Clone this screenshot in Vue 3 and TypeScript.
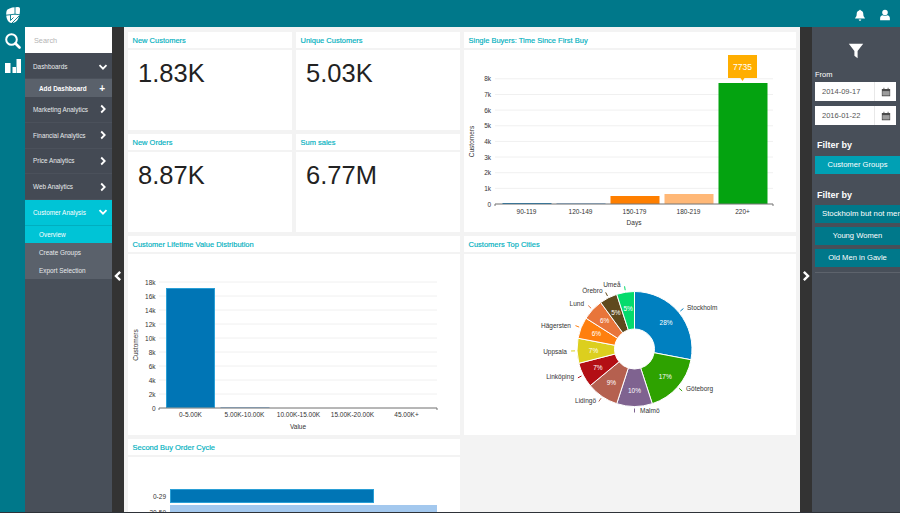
<script setup lang="ts">
interface Stat {
  title: string;
  value: string;
}
interface Slice {
  name: string;
  pct: number;
  color: string;
  lx: number;
  ly: number;
  anchor: string;
}

const stats: Stat[] = [
  { title: "New Customers", value: "1.83K" },
  { title: "Unique Customers", value: "5.03K" },
  { title: "New Orders", value: "8.87K" },
  { title: "Sum sales", value: "6.77M" },
];

const menu = [
  { label: "Marketing Analytics" },
  { label: "Financial Analytics" },
  { label: "Price Analytics" },
  { label: "Web Analytics" },
];

const buyersTicks = [0, 1, 2, 3, 4, 5, 6, 7, 8].map((n) => ({
  label: n === 0 ? "0" : n + "k",
  y: 154 - n * 15.65,
}));
const buyersBars = [
  { x: 38.5, h: 1, color: "#0075b5" },
  { x: 92.5, h: 1, color: "#8fb8dc" },
  { x: 146.5, h: 8, color: "#ff7f00" },
  { x: 200.5, h: 10, color: "#ffb877" },
  { x: 254.5, h: 121, color: "#04a310" },
];
const buyersLabels = [
  { x: 62.5, text: "90-119" },
  { x: 116.5, text: "120-149" },
  { x: 170.5, text: "150-179" },
  { x: 224.5, text: "180-219" },
  { x: 278.5, text: "220+" },
];

const lifetimeTicks = [0, 2, 4, 6, 8, 10, 12, 14, 16, 18].map((n) => ({
  label: n === 0 ? "0" : n + "k",
  y: 154 - n * 7,
}));
const lifetimeLabels = [
  { x: 62.5, text: "0-5.00K" },
  { x: 116.5, text: "5.00K-10.00K" },
  { x: 170.5, text: "10.00K-15.00K" },
  { x: 224.5, text: "15.00K-20.00K" },
  { x: 278.5, text: "45.00K+" },
];

const slices: Slice[] = [
  { name: "Stockholm", pct: 28, color: "#0080c0", lx: 223, ly: 53, anchor: "start" },
  { name: "Göteborg", pct: 17, color: "#2ea200", lx: 222, ly: 134, anchor: "start" },
  { name: "Malmö", pct: 10, color: "#7f6390", lx: 176, ly: 156, anchor: "start" },
  { name: "Lidingö", pct: 9, color: "#b5604f", lx: 132, ly: 146, anchor: "end" },
  { name: "Linköping", pct: 7, color: "#b30f14", lx: 110, ly: 122.5, anchor: "end" },
  { name: "Uppsala", pct: 7, color: "#dccf1e", lx: 103, ly: 97, anchor: "end" },
  { name: "Hägersten", pct: 6, color: "#ff7f0e", lx: 107, ly: 71, anchor: "end" },
  { name: "Lund", pct: 6, color: "#e8753a", lx: 120, ly: 49, anchor: "end" },
  { name: "Örebro", pct: 5, color: "#5f4a1e", lx: 138.5, ly: 36, anchor: "end" },
  { name: "Umeå", pct: 5, color: "#05db6c", lx: 156.5, ly: 30, anchor: "end" },
];

const cx = 170.5;
const cy = 95;
const outer = 57.5;
const inner = 20;
const polar = (r: number, turn: number) => {
  const a = turn * Math.PI * 2;
  return { x: cx + r * Math.sin(a), y: cy - r * Math.cos(a) };
};

let run = 0;
const pie = slices.map((s) => {
  const start = run / 100;
  run += s.pct;
  const end = run / 100;
  const mid = (start + end) / 2;
  const a = polar(outer, start);
  const b = polar(outer, end);
  const c = polar(inner, end);
  const d = polar(inner, start);
  const l1 = polar(outer + 2, mid);
  const l2 = polar(outer + 6, mid);
  const p = polar(41, mid);
  return {
    ...s,
    path: `M${a.x} ${a.y}A${outer} ${outer} 0 0 1 ${b.x} ${b.y}L${c.x} ${c.y}A${inner} ${inner} 0 0 0 ${d.x} ${d.y}Z`,
    line: `M${l1.x} ${l1.y}L${l2.x} ${l2.y}`,
    px: p.x,
    py: p.y + 2.5,
  };
});
</script>

<template>
  <div class="app">
    <header class="topbar">
      <svg class="logo" viewBox="0 0 14 16">
        <path d="M1.500 2.500C4 .8 8 0 12 0c1.300 0 2 .7 2 2 0 4-.6 8-2.500 11-1.300 2-3.500 3-5.500 3-2.500 0-4-1.500-5-4C0 9.500-.3 4 1.500 2.500Z" />
        <path d="M9 0V7.500M0 8.200 9 7.200 14 7.800M4.500 8V13.500L7.500 10.500M6 16 13 9" class="logo-cut" />
      </svg>
      <div class="top-icons">
        <svg viewBox="0 0 16 16" class="top-icon">
          <path d="M8 1a1 1 0 0 1 1 1.100c2.400.5 3.400 2.500 3.400 4.600 0 3 1 4.300 2.100 5.300v.8H1.500V12c1.100-1 2.100-2.300 2.100-5.300 0-2.100 1-4.100 3.400-4.600A1 1 0 0 1 8 1ZM6.300 14h3.400a1.700 1.700 0 0 1-3.400 0Z" />
        </svg>
        <svg viewBox="0 0 16 16" class="top-icon">
          <circle cx="8" cy="4.700" r="3.700" />
          <path d="M1.500 15v-3c0-2.300 1.800-3.500 3.700-3.800 1.700 1.200 3.900 1.200 5.600 0 1.900.3 3.700 1.500 3.700 3.800v3Z" />
        </svg>
      </div>
    </header>

    <div class="main">
      <nav class="rail">
        <svg viewBox="0 0 17 17" class="rail-icon">
          <circle cx="7.500" cy="7.500" r="5.300" fill="none" stroke="#fff" stroke-width="2" />
          <path d="M11.500 11.500 15.500 15.500" stroke="#fff" stroke-width="2.600" stroke-linecap="round" />
        </svg>
        <svg viewBox="0 0 17 17" class="rail-icon bars">
          <rect x="1" y="6" width="5.500" height="10" />
          <rect x="8.500" y="10" width="3.500" height="6" />
          <rect x="12.500" y="2" width="4.500" height="14" />
        </svg>
      </nav>

      <aside class="sidebar">
        <div class="search">Search</div>
        <div class="row first">
          <span>Dashboards</span>
          <svg viewBox="0 0 10 10" class="chev"><path d="M1.500 3.200 5 6.700 8.500 3.200" /></svg>
        </div>
        <div class="row sub add">
          <span>Add Dashboard</span>
          <b class="plus">+</b>
        </div>
        <div v-for="item in menu" :key="item.label" class="row">
          <span>{{ item.label }}</span>
          <svg viewBox="0 0 10 10" class="chev"><path d="M3.200 1.500 6.700 5 3.200 8.500" /></svg>
        </div>
        <div class="row active">
          <span>Customer Analysis</span>
          <svg viewBox="0 0 10 10" class="chev"><path d="M1.500 3.200 5 6.700 8.500 3.200" /></svg>
        </div>
        <div class="row sub active-sub">Overview</div>
        <div class="row sub">Create Groups</div>
        <div class="row sub">Export Selection</div>
      </aside>

      <div class="strip">
        <svg viewBox="0 0 10 10" class="strip-chev"><path d="M6.800 1.500 3.300 5 6.800 8.500" /></svg>
      </div>

      <main class="content">
        <div class="grid">
          <section v-for="(s, i) in stats" :key="s.title" class="card" :class="'stat' + i">
            <h3>{{ s.title }}</h3>
            <div class="body value">{{ s.value }}</div>
          </section>

          <section class="card buyers">
            <h3>Single Buyers: Time Since First Buy</h3>
            <div class="body">
              <svg class="chart" viewBox="0 0 332 182" width="332" height="182">
                <g v-for="t in buyersTicks" :key="t.label">
                  <line x1="31" x2="309" :y1="t.y" :y2="t.y" class="grid-line" />
                  <text x="27" :y="t.y + 2.5" text-anchor="end" class="tick">{{ t.label }}</text>
                </g>
                <rect v-for="b in buyersBars" :key="b.x" :x="b.x" :y="154 - b.h" width="49" :height="b.h" :fill="b.color" />
                <path d="M31 156V154H309V156" class="axis" />
                <text v-for="l in buyersLabels" :key="l.text" :x="l.x" y="163.5" text-anchor="middle" class="tick">{{ l.text }}</text>
                <text x="170" y="175" text-anchor="middle" class="tick">Days</text>
                <text transform="translate(9.500 91.500) rotate(-90)" text-anchor="middle" class="tick">Customers</text>
                <rect x="264" y="5" width="29" height="23" fill="#ffae00" />
                <path d="M276.500 28H280.500L278.500 31Z" fill="#ffae00" />
                <text x="278.500" y="19.500" text-anchor="middle" class="tip">7735</text>
              </svg>
            </div>
          </section>

          <section class="card lifetime">
            <h3>Customer Lifetime Value Distribution</h3>
            <div class="body">
              <svg class="chart" viewBox="0 0 332 181" width="332" height="181">
                <g v-for="t in lifetimeTicks" :key="t.label">
                  <line x1="31" x2="309" :y1="t.y" :y2="t.y" class="grid-line" />
                  <text x="27.500" :y="t.y + 2.5" text-anchor="end" class="tick">{{ t.label }}</text>
                </g>
                <rect x="38.500" y="34.500" width="48" height="119" fill="#0075b5" stroke="#2a9fd6" />
                <rect x="92.500" y="153" width="49" height="1" fill="#8fb8dc" />
                <path d="M31 156V154H309V156" class="axis" />
                <text v-for="l in lifetimeLabels" :key="l.text" :x="l.x" y="162.500" text-anchor="middle" class="tick">{{ l.text }}</text>
                <text x="170" y="174.500" text-anchor="middle" class="tick">Value</text>
                <text transform="translate(9.500 91) rotate(-90)" text-anchor="middle" class="tick">Customers</text>
              </svg>
            </div>
          </section>

          <section class="card cities">
            <h3>Customers Top Cities</h3>
            <div class="body">
              <svg class="chart" viewBox="0 0 332 181" width="332" height="181">
                <g v-for="s in pie" :key="s.name">
                  <path :d="s.path" :fill="s.color" stroke="#fff" stroke-width="1" />
                  <path :d="s.line" :stroke="s.color" fill="none" />
                  <text :x="s.lx" :y="s.ly + 2.5" :text-anchor="s.anchor" class="tick">{{ s.name }}</text>
                  <text :x="s.px" :y="s.py" text-anchor="middle" class="pct">{{ s.pct }}%</text>
                </g>
              </svg>
            </div>
          </section>

          <section class="card cycle">
            <h3>Second Buy Order Cycle</h3>
            <div class="body">
              <svg class="chart" viewBox="0 0 332 60" width="332" height="60">
                <rect x="42.500" y="32.500" width="203" height="13" fill="#0075b5" stroke="#2a9fd6" />
                <rect x="42" y="48" width="267" height="14" fill="#a3c8ee" />
                <text x="38" y="41.500" text-anchor="end" class="tick">0-29</text>
                <text x="38" y="57.500" text-anchor="end" class="tick">30-59</text>
              </svg>
            </div>
          </section>
        </div>
      </main>

      <div class="strip">
        <svg viewBox="0 0 10 10" class="strip-chev"><path d="M3.200 1.500 6.700 5 3.200 8.500" /></svg>
      </div>

      <aside class="filters">
        <svg viewBox="0 0 20 20" class="funnel"><path d="M1 1H19L12 10V19L8 16V10Z" /></svg>
        <div class="from">From</div>
        <div class="date">
          <span class="date-text">2014-09-17</span>
          <span class="cal-box">
            <svg viewBox="0 0 12 12" class="cal"><path d="M1 2.500H3V1H4V2.500H8V1H9V2.500H11V11H1ZM2 5V10H10V5Z" /><rect x="2" y="5" width="8" height="5" opacity=".55" /></svg>
          </span>
        </div>
        <div class="date">
          <span class="date-text">2016-01-22</span>
          <span class="cal-box">
            <svg viewBox="0 0 12 12" class="cal"><path d="M1 2.500H3V1H4V2.500H8V1H9V2.500H11V11H1ZM2 5V10H10V5Z" /><rect x="2" y="5" width="8" height="5" opacity=".55" /></svg>
          </span>
        </div>
        <div class="filter-title">Filter by</div>
        <div class="pill light">Customer Groups</div>
        <div class="filter-title second">Filter by</div>
        <div class="pill wide">Stockholm but not men</div>
        <div class="pill">Young Women</div>
        <div class="pill">Old Men in Gavle</div>
        <div class="rule"></div>
      </aside>
    </div>
  </div>
</template>

<style>
html,
body {
  margin: 0;
  overflow: hidden;
}
</style>

<style scoped>
.app {
  width: 900px;
  height: 513px;
  overflow: hidden;
  display: flex;
  flex-direction: column;
  font-family: "Liberation Sans", Arial, sans-serif;
  background: #00788a;
  border-bottom: 1px solid #2e3238;
  box-sizing: border-box;
}

.topbar {
  height: 27px;
  flex: none;
  background: #00788a;
  display: flex;
  align-items: center;
  justify-content: space-between;
  padding: 3px 9px 0 6px;
  box-sizing: border-box;
}

.logo {
  width: 14px;
  height: 16px;
  fill: #fff;
}

.logo-cut {
  fill: none;
  stroke: #00788a;
  stroke-width: 0.9;
}

.top-icons {
  display: flex;
  gap: 13px;
  align-items: center;
}

.top-icon {
  width: 12px;
  height: 12px;
  fill: #fff;
}

.main {
  flex: 1;
  display: flex;
  min-height: 0;
}

.rail {
  width: 25px;
  flex: none;
  display: flex;
  flex-direction: column;
  align-items: center;
  gap: 8px;
  padding-top: 5px;
  box-sizing: border-box;
}

.rail-icon {
  width: 17px;
  height: 17px;
}

.rail-icon.bars {
  fill: #fff;
}

.sidebar {
  width: 87px;
  flex: none;
  background: #484f59;
}

.search {
  height: 26px;
  background: #fff;
  color: #b5b5b5;
  font-size: 7.300px;
  line-height: 28px;
  padding-left: 9px;
  box-sizing: border-box;
}

.row {
  display: flex;
  align-items: center;
  justify-content: space-between;
  height: 25.750px;
  padding: 0 4px 0 8px;
  box-sizing: border-box;
  color: #e8eaec;
  font-size: 6.400px;
  background: #444a54;
  border-bottom: 1px solid #4b515b;
}

.row.first {
  height: 26px;
  padding-top: 2px;
}

.row.sub {
  height: 18px;
  background: #5a616b;
  padding-left: 14px;
  border-bottom: none;
}

.row.add {
  color: #fff;
  font-weight: 700;
  padding-left: 14px;
}

.row.active {
  background: #00c4d6;
  color: #fff;
  border-bottom: 1px solid #00aebf;
}

.row.active-sub {
  height: 17.500px;
  background: #00c4d6;
  color: #fff;
}

.plus {
  font-size: 10px;
  margin-right: 3px;
}

.chev {
  width: 10px;
  height: 10px;
  fill: none;
  stroke: #fff;
  stroke-width: 1.800;
}

.strip {
  width: 12px;
  flex: none;
  background: #333;
  display: flex;
  align-items: center;
  justify-content: center;
}

.strip-chev {
  width: 12px;
  height: 12px;
  fill: none;
  stroke: #fff;
  stroke-width: 2;
  margin-top: 13px;
}

.content {
  flex: 1;
  min-width: 0;
  background: #f3f3f3;
  padding: 5px 4px 0;
  overflow: hidden;
}

.grid {
  display: grid;
  grid-template-columns: 164px 164px 332px;
  grid-template-rows: 98px 98px 199px 100px;
  gap: 4px;
}

.card {
  display: flex;
  flex-direction: column;
  gap: 2px;
  min-height: 0;
}

.card h3 {
  margin: 0;
  height: 16px;
  flex: none;
  background: #fff;
  color: #00b0c0;
  font-size: 7.500px;
  font-weight: 400;
  line-height: 17px;
  padding-left: 4.500px;
  -webkit-text-stroke: 0.15px #00b0c0;
}

.body {
  flex: 1;
  background: #fff;
  min-height: 0;
}

.value {
  font-size: 25.500px;
  color: #222;
  font-weight: 400;
  padding: 8px 0 0 10px;
  line-height: 30px;
}

.buyers {
  grid-column: 3;
  grid-row: 1 / span 2;
}

.lifetime {
  grid-column: 1 / span 2;
  grid-row: 3;
}

.cities {
  grid-column: 3;
  grid-row: 3;
}

.cycle {
  grid-column: 1 / span 2;
  grid-row: 4;
}

.chart {
  display: block;
}

.grid-line {
  stroke: #f0f0f0;
  stroke-width: 1;
}

.axis {
  fill: none;
  stroke: #777;
  stroke-width: 1;
}

.tick {
  font-size: 6.500px;
  fill: #333;
}

.pct {
  font-size: 6.500px;
  fill: #fff;
}

.tip {
  font-size: 8.500px;
  fill: #fff;
}

.filters {
  width: 88px;
  flex: none;
  background: #484f59;
  color: #fff;
  padding: 16px 0 0 3px;
  box-sizing: border-box;
  overflow: hidden;
  display: flex;
  flex-direction: column;
}

.funnel {
  width: 16px;
  height: 16px;
  flex: none;
  fill: #fff;
  align-self: center;
  margin-left: -4px;
}

.from {
  font-size: 7.500px;
  margin-top: 11px;
  height: 11px;
  flex: none;
}

.date {
  width: 81px;
  height: 19px;
  flex: none;
  margin: 1px 0 4px;
  background: #fff;
  display: flex;
  align-items: center;
  color: #555;
  font-size: 7.500px;
  box-sizing: border-box;
}

.date-text {
  flex: 1;
  padding-left: 7px;
}

.cal-box {
  width: 22px;
  height: 100%;
  display: flex;
  align-items: center;
  justify-content: center;
  border-left: 1px solid #e8e8e8;
  box-sizing: border-box;
}

.cal {
  width: 10px;
  height: 10px;
  fill: #4a4a4a;
}

.filter-title {
  font-size: 9px;
  font-weight: 700;
  margin: 11px 0 4px 2px;
  height: 12px;
  flex: none;
}

.filter-title.second {
  margin: 12.500px 0 3px 2px;
}

.pill {
  width: 85px;
  height: 18px;
  flex: none;
  margin: 0 0 4px;
  background: #00788a;
  font-size: 7.600px;
  line-height: 18px;
  text-align: center;
  white-space: nowrap;
  overflow: hidden;
}

.pill.wide {
  text-align: left;
  padding-left: 7px;
  font-size: 7.800px;
  box-sizing: border-box;
}

.pill.light {
  height: 17.500px;
  background: #00a0b4;
}

.rule {
  height: 1px;
  flex: none;
  background: #5d636c;
  margin-top: 1px;
}
</style>
